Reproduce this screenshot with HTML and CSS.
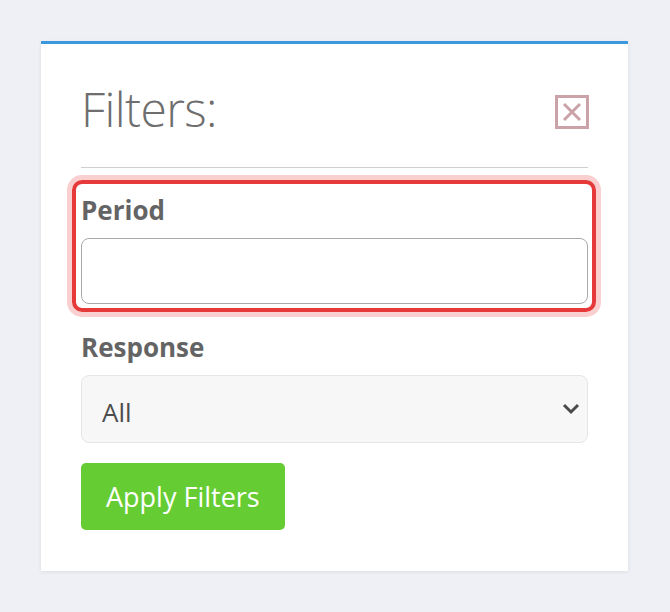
FILE: index.html
```html
<!DOCTYPE html>
<html>
<head>
<meta charset="utf-8">
<link rel="stylesheet" href="styles.css">
</head>
<body>
<div class="card">
  <div class="card-header">
    <h2 class="title">Filters:</h2>
    <button class="close" aria-label="Close">
      <svg width="34" height="34" viewBox="0 0 34 34">
        <rect x="1.5" y="1.5" width="31" height="31" fill="none" stroke="#cba2a7" stroke-width="3"/>
        <path d="M9 9 L25 25 M25 9 L9 25" stroke="#cba2a7" stroke-width="3" fill="none"/>
      </svg>
    </button>
  </div>
  <hr class="divider">
  <div class="field field-highlight">
    <label class="label">Period</label>
    <input class="input" type="text">
  </div>
  <div class="field field-response">
    <label class="label">Response</label>
    <div class="select-wrap">
      <select class="select">
        <option>All</option>
      </select>
      <svg class="chevron" width="18" height="12" viewBox="0 0 18 12">
        <path d="M2 2 L9 9 L16 2" stroke="#4a4a4a" stroke-width="3" fill="none"/>
      </svg>
    </div>
  </div>
  <button class="apply">Apply Filters</button>
</div>
</body>
</html>
```

FILE: styles.css
```css
* { box-sizing: border-box; }
html, body {
  margin: 0;
  padding: 0;
  background: #eff0f5;
  font-family: "Open Sans", "Noto Sans", sans-serif;
}
body {
  padding: 41px 42px 0 41px;
  height: 612px;
}
.card {
  width: 587px;
  background: #fff;
  border-top: 3px solid #3b98de;
  box-shadow: 0 1px 4px rgba(0, 0, 0, 0.08);
  padding: 41px 40px 41px 40px;
}
.card-header {
  display: flex;
  align-items: center;
  justify-content: space-between;
  height: 48px;
}
.title {
  margin: 0;
  font-weight: 300;
  font-size: 48px;
  line-height: 48px;
  letter-spacing: -0.6px;
  color: #6e6e6e;
}
.close {
  border: 0;
  background: none;
  padding: 0;
  width: 34px;
  height: 34px;
  margin-top: 5px;
  margin-right: -1px;
  display: block;
}
.close svg { display: block; }
.divider {
  margin: 34px 0 0 0;
  border: 0;
  border-top: 1px solid #cfcfcf;
  height: 0;
}
.field {
  display: flex;
  flex-direction: column;
}
.field-highlight {
  margin: 12px -8px 0 -9px;
  padding: 10px 4px 4px 5px;
  border: 4px solid #e6393a;
  border-radius: 10px;
  box-shadow: 0 0 0 5px #f9cfcf;
}
.label {
  font-weight: 700;
  font-size: 26px;
  line-height: 32px;
  color: #646464;
}
.input {
  margin-top: 12px;
  height: 66px;
  border: 1px solid #a9a9a9;
  border-radius: 8px;
  font-size: 26px;
  font-family: inherit;
  padding: 0 20px;
  background: #fff;
}
.field-response {
  margin-top: 19px;
}
.select-wrap {
  position: relative;
  margin-top: 12px;
}
.select {
  width: 100%;
  height: 68px;
  -webkit-appearance: none;
  appearance: none;
  background: #f7f7f7;
  border: 1px solid #e6e6e6;
  border-radius: 8px;
  font-family: inherit;
  font-size: 26px;
  color: #4d4d4d;
  padding: 6px 40px 0 20px;
}
.chevron {
  position: absolute;
  right: 8px;
  top: 28px;
}
.apply {
  display: block;
  margin-top: 20px;
  height: 67px;
  padding: 0 25px;
  background: #66cc33;
  border: 0;
  border-radius: 5px;
  color: #fff;
  font-family: inherit;
  font-size: 27px;
}
```
